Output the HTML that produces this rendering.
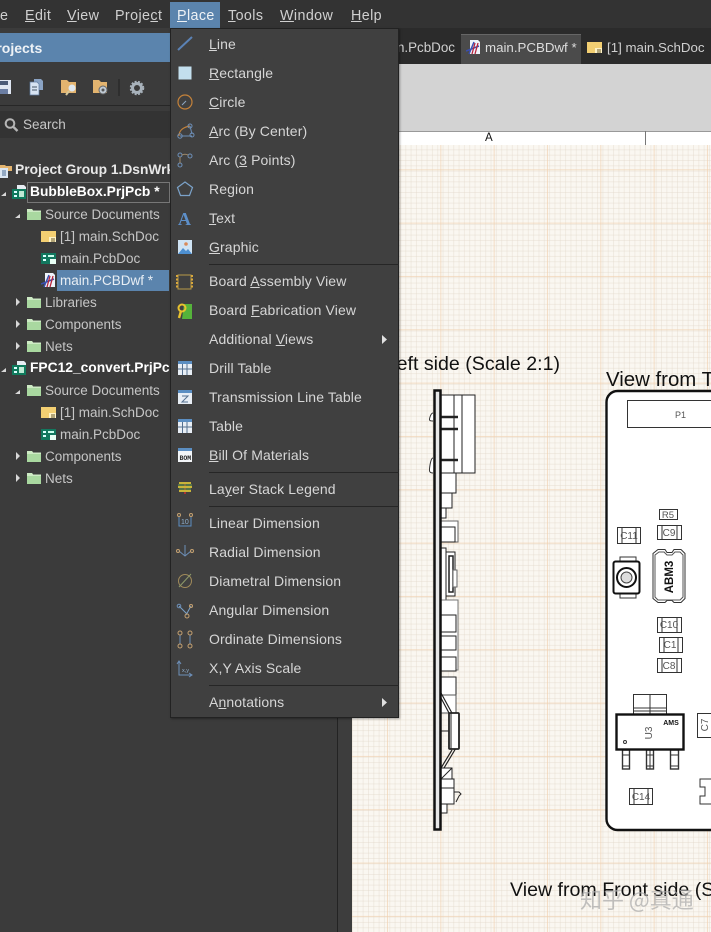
<!DOCTYPE html>
<html><head><meta charset="utf-8">
<style>
html,body{margin:0;padding:0;background:#3b3b3b}
#p{position:relative;width:711px;height:932px;overflow:hidden;background:#3b3b3b;font-family:"Liberation Sans","Noto Sans CJK SC",sans-serif;font-size:14px;color:#cfcfcf}
#p div,#p span.a,#p svg.a{position:absolute}
.t{white-space:nowrap;line-height:20px;height:20px}
.m{left:209px;color:#d6d6d6;letter-spacing:.12px}
.tb{color:#d0d0d0;font-size:14.3px;top:6px;letter-spacing:.4px}
.tr{color:#c6c6c6;font-size:13.5px;margin-top:1px}
.b{font-weight:bold;color:#e8e8e8;font-size:13.8px}
.sep{height:1px;background:#262626;left:209px;width:190px}
#canvas{left:352px;top:145px;width:359px;height:787px;background-color:#faf7f1;
background-image:
linear-gradient(90deg,rgba(240,208,175,.65) 1px,transparent 1px),
linear-gradient(0deg,rgba(240,208,175,.65) 1px,transparent 1px),
linear-gradient(90deg,rgba(225,215,200,.4) 1px,transparent 1px),
linear-gradient(0deg,rgba(225,215,200,.4) 1px,transparent 1px);
background-size:53.33px 53.33px,53.33px 53.33px,5.33px 5.33px,5.33px 5.33px;
background-position:35px 0,0 25.3px,0 0,0 0}
</style></head><body>
<div id="p">
<svg width="0" height="0" style="position:absolute"><defs>
<g id="fold"><path d="M0 2h5l1 1.500h8v9.500H0z" fill="#a9d8a0"/><path d="M0 2h5l1 1.500h8v1.500H0z" fill="#cdeac4"/></g>
<g id="sch"><rect x="0" y="1" width="15" height="11" fill="#f3cf72"/><rect x="8" y="7" width="7" height="5" fill="#fff3c7"/><path d="M10 9h4M10 11h4" stroke="#6a5a2a"/></g>
<g id="pcb"><rect x="0" y="1" width="15" height="11" fill="#12785f"/><rect x="2" y="3" width="3" height="2" fill="#dff"/><rect x="2" y="7" width="3" height="2" fill="#dff"/><rect x="7" y="3" width="6" height="2" fill="#cfe"/><rect x="9" y="7" width="6" height="5" fill="#e8fff5"/></g>
<g id="dwf"><path d="M4 0h8l2 2v12H4z" fill="#eef3fa"/><path d="M0 11L13 6M3 14L8 2" stroke="#3a4fb0" stroke-width="1.500"/><path d="M9 3L6 14M12 3L9 14" stroke="#b8243c" stroke-width="1.300"/></g>
<g id="prj"><path d="M5 0h7l2 2v6H5z" fill="#e6ecf2"/><rect x="0" y="4" width="14" height="10" fill="#0f7a5c"/><rect x="2" y="6" width="3" height="2" fill="#dff"/><rect x="2" y="10" width="3" height="2" fill="#dff"/><rect x="7" y="6" width="5" height="6" fill="#bfe9d5"/></g>
</defs></svg>

<!-- document area -->
<div style="left:338px;top:28px;width:373px;height:36px;background:#2b2b2b"></div>
<div style="left:352px;top:64px;width:359px;height:67px;background:#d3d3d3"></div>
<div style="left:352px;top:131px;width:359px;height:14px;background:#fff;border-top:1px solid #999;box-sizing:border-box"></div>
<div style="left:645px;top:131px;width:1px;height:14px;background:#777"></div>
<div class="t" style="left:485px;top:128px;font-size:11.500px;color:#111">A</div>
<div style="left:461px;top:34px;width:120px;height:30px;background:#4b4b4b;border-top:1px solid #666;box-sizing:border-box"></div>
<div class="t" style="left:396px;top:38px;color:#d0d0d0;font-size:13.400px;width:59px;overflow:hidden;text-align:right">n.PcbDoc</div>
<svg class="a" style="left:466px;top:40px" width="16" height="16"><use href="#dwf"/></svg>
<div class="t" style="left:485px;top:38px;color:#dcdcdc;font-size:13.300px">main.PCBDwf *</div>
<svg class="a" style="left:587px;top:41px" width="16" height="14"><use href="#sch"/></svg>
<div class="t" style="left:607px;top:38px;color:#d0d0d0;font-size:13.300px">[1] main.SchDoc</div>

<div id="canvas"></div>

<!-- drawing -->
<svg class="a" style="left:0;top:0" width="711" height="932" font-family="'Liberation Sans',sans-serif">
<g fill="#fff" stroke="#222" stroke-width="1">
<rect x="441" y="395" width="34" height="78"/>
<path d="M454 395v78M462 395v78" fill="none"/>
<rect x="441" y="473" width="15" height="20"/>
<rect x="441" y="493" width="11" height="15"/>
<rect x="441" y="508" width="5" height="10"/>
<rect x="441" y="521" width="17" height="21" stroke="#666"/>
<rect x="441" y="527" width="14" height="15"/>
<rect x="441" y="548" width="5" height="52"/>
<rect x="446" y="552" width="9" height="44"/>
<rect x="449" y="556" width="4" height="36" stroke-width="1.500"/>
<rect x="453" y="570" width="4" height="17" stroke="#666"/>
<rect x="441" y="600" width="17" height="70" stroke="#777"/>
<rect x="441" y="615" width="15" height="17"/>
<rect x="441" y="636" width="15" height="14"/>
<rect x="441" y="657" width="15" height="14"/>
<rect x="441" y="677" width="15" height="18"/>
<rect x="441" y="695" width="15" height="18" stroke="#555"/>
<path d="M441 693L453 715M441 698L449 713M441 768L452 750M444 768L456 748" fill="none" stroke-width="1.200"/>
<path d="M441 731h9M441 713h0" fill="none"/>
<rect x="449" y="713" width="10" height="36" rx="1" stroke-width="1.800"/>
<path d="M451 713v36" fill="none"/>
<rect x="441" y="768" width="11" height="11"/>
<path d="M441 779L452 768" fill="none"/>
<rect x="441" y="779" width="13" height="10"/>
<rect x="441" y="788" width="13" height="16"/>
<rect x="441" y="804" width="6" height="9"/>
<path d="M454 792h5l2 2-2 2-3 6" fill="none"/>
</g>
<path d="M441 417h17M441 429h17M441 460h17" stroke="#222" stroke-width="2.500"/>
<path d="M433 421c-4 0-4-1-3-4s2-4 3-4M433 473c-4 0-4-2-3-8s2-7 3-7" fill="#fff" stroke="#333"/>
<rect x="434.500" y="390.500" width="6" height="439" fill="#e8e8e8" stroke="#111" stroke-width="2.500"/>
<text x="560" y="370" text-anchor="end" font-size="19.600" fill="#111">View from Left side (Scale 2:1)</text>

<rect x="606.500" y="391" width="130" height="439" rx="11" fill="#fff" stroke="#111" stroke-width="2.400"/>
<text x="606" y="386" font-size="20.400" fill="#111">View from Top</text>
<g fill="#fff" stroke="#333" stroke-width="1">
<rect x="627.500" y="400.500" width="100" height="27"/>
<rect x="659.500" y="509.500" width="18" height="10"/>
<rect x="657.500" y="525.500" width="24" height="14"/><path d="M662 525.500v14M677 525.500v14"/>
<rect x="617.500" y="527.500" width="23" height="16"/><path d="M622 527.500v16M636 527.500v16"/>
<rect x="657.500" y="617.500" width="24" height="15"/><path d="M662 617.500v15M677 617.500v15"/>
<rect x="659.500" y="637.500" width="23" height="15"/><path d="M664 637.500v15M678 637.500v15"/>
<rect x="657.500" y="658.500" width="24" height="14"/><path d="M662 658.500v14M677 658.500v14"/>
<rect x="629.500" y="788.500" width="23" height="16"/><path d="M634 788.500v16M648 788.500v16"/>
<rect x="697.500" y="713.500" width="20" height="24"/>
<path d="M711 779h-11v8h5v9h-5v8h11"/>
<rect x="633.500" y="694.500" width="33" height="20"/><path d="M633.500 708h33M633.500 711h33M650 694.500v20"/>
<rect x="622.500" y="750" width="7" height="19" stroke-width="1.400"/><path d="M622.500 755h7M622.500 766h7"/>
<rect x="646.500" y="750" width="7" height="19" stroke-width="1.400"/><path d="M650 750v19M646.500 755h7M646.500 766h7"/>
<rect x="670.500" y="750" width="8" height="19" stroke-width="1.400"/><path d="M670.500 755h8M670.500 766h8"/>
</g>
<rect x="616.500" y="714.500" width="67" height="35" fill="#fff" stroke="#111" stroke-width="2.400"/>
<circle cx="625" cy="742" r="1.500" fill="none" stroke="#333"/>
<text x="671" y="725" text-anchor="middle" font-size="7" font-weight="bold" fill="#111">AMS</text>
<text transform="translate(652,733) rotate(-90)" text-anchor="middle" font-size="10" fill="#555">U3</text>
<text x="680.500" y="418" text-anchor="middle" font-size="9" fill="#555">P1</text>
<text x="668" y="518" text-anchor="middle" font-size="9.500" fill="#555">R5</text>
<text x="669" y="536" text-anchor="middle" font-size="10" fill="#555">C9</text>
<text x="629" y="539" text-anchor="middle" font-size="10" fill="#555">C11</text>
<text x="669" y="628" text-anchor="middle" font-size="10" fill="#555">C10</text>
<text x="670" y="648" text-anchor="middle" font-size="10" fill="#555">C1</text>
<text x="669" y="669" text-anchor="middle" font-size="10" fill="#555">C8</text>
<text x="641" y="800" text-anchor="middle" font-size="10" fill="#555">C14</text>
<text transform="translate(708,725) rotate(-90)" text-anchor="middle" font-size="10" fill="#555">C7</text>
<path d="M658 549.500h7l2 3h5l2-3h7l4 4v45l-4 4h-7l-2-2h-5l-2 2h-7l-5-4v-45z" fill="#fff" stroke="#333"/>
<path d="M659 552h5l3 3h5l3-3h5l3 3v42l-3 3h-22l-3-3v-42z" fill="none" stroke="#555"/>
<text transform="translate(673,577) rotate(-90)" text-anchor="middle" font-size="11.500" font-weight="bold" fill="#111">ABM3</text>
<rect x="620" y="557" width="16" height="5" fill="#fff" stroke="#333"/>
<rect x="620" y="593" width="16" height="5" fill="#fff" stroke="#333"/>
<rect x="613.500" y="561.500" width="26" height="32" rx="2" fill="#fff" stroke="#111" stroke-width="2"/>
<circle cx="626.500" cy="577.500" r="9.500" fill="#fff" stroke="#111" stroke-width="2"/>
<circle cx="626.500" cy="577.500" r="5.500" fill="#ddd" stroke="#444"/>
<text x="510" y="896" font-size="19.600" fill="#111">View from Front side (Scale 2:1)</text>
<text x="580" y="908" font-size="22" fill="#aaa" fill-opacity=".72" font-family="'Noto Sans CJK SC',sans-serif">知乎 @真通</text>
</svg>

<!-- left panel -->
<div style="left:0;top:0;width:711px;height:28px;background:#333"></div>
<div style="left:0;top:28px;width:338px;height:904px;background:#3b3b3b"></div>
<div style="left:337px;top:28px;width:1px;height:904px;background:#232323"></div>
<div style="left:338px;top:64px;width:14px;height:868px;background:#3d3d3d"></div>
<div style="left:0;top:33px;width:338px;height:29px;background:#5b84ad"></div>
<div class="t" style="left:-13px;top:38px;color:#eef2f6;font-weight:bold;font-size:14px">Projects</div>
<div style="left:0;top:105px;width:338px;height:1px;background:#272727"></div>
<div style="left:0;top:111px;width:338px;height:27px;background:#333"></div>
<svg class="a" style="left:0;top:77px" width="150" height="22">
<rect x="-2" y="3" width="13" height="14" fill="#dfe6f2"/><rect x="0" y="4" width="8" height="4" fill="#4a5a78"/><rect x="0" y="12" width="8" height="5" fill="#6b7ea3"/>
<path d="M34 2h7l2 2v9h-9z" fill="#8aa3c4"/><path d="M30 5h7l2 2v11h-9z" fill="#d7e3f2" stroke="#5d7aa0" stroke-width=".7"/><path d="M32 10h5M32 13h5" stroke="#456"/>
<path d="M61 3h6l2 2h7v11H61z" fill="#e3b46f"/><circle cx="72" cy="11" r="3.500" fill="#dfe8f0"/><path d="M69 14l-3 4" stroke="#d8c89a" stroke-width="2"/>
<path d="M93 3h6l2 2h6v11H93z" fill="#e3b46f"/><circle cx="103" cy="13" r="4" fill="#bfcad4" stroke="#666"/><circle cx="103" cy="13" r="1.500" fill="#555"/>
<path d="M119 2v17" stroke="#222"/>
<circle cx="137" cy="11" r="4.500" fill="none" stroke="#a8b2bb" stroke-width="3"/><circle cx="137" cy="11" r="6.500" fill="none" stroke="#a8b2bb" stroke-width="1.500" stroke-dasharray="2 1.500"/>
</svg>
<svg class="a" style="left:4px;top:117px" width="16" height="16"><circle cx="6" cy="6.500" r="4.300" fill="none" stroke="#b5b5b5" stroke-width="2"/><path d="M9.500 10l4 4" stroke="#b5b5b5" stroke-width="2.400"/></svg>
<div class="t" style="left:23px;top:115px;color:#c8c8c8;font-size:13.500px">Search</div>

<!-- tree -->
<div style="left:27px;top:182px;width:143px;height:21px;border:1px solid #777;box-sizing:border-box"></div>
<div style="left:57px;top:270px;width:112px;height:21px;background:#5b84ad"></div>
<svg class="a" style="left:0;top:163px" width="14" height="16"><path d="M0 2h5l1 1h6v5H0z" fill="#e3b46f"/><rect x="0" y="5" width="8" height="10" fill="#dbe6f2"/><path d="M2 8h4M2 10h4M2 12h4" stroke="#4a6a92"/></svg>
<div class="t b" style="left:15px;top:160px;width:155px;overflow:hidden">Project Group 1.DsnWrk</div>
<svg class="a" style="left:12px;top:185px" width="15" height="15"><use href="#prj"/></svg>
<div class="t b" style="left:30px;top:182px;color:#fff;width:140px;overflow:hidden">BubbleBox.PrjPcb *</div>
<svg class="a" style="left:27px;top:207px" width="14" height="14"><use href="#fold"/></svg>
<div class="t tr" style="left:45px;top:204px">Source Documents</div>
<svg class="a" style="left:41px;top:230px" width="16" height="13"><use href="#sch"/></svg>
<div class="t tr" style="left:60px;top:226px">[1] main.SchDoc</div>
<svg class="a" style="left:41px;top:252px" width="16" height="13"><use href="#pcb"/></svg>
<div class="t tr" style="left:60px;top:248px">main.PcbDoc</div>
<svg class="a" style="left:41px;top:273px" width="16" height="16"><use href="#dwf"/></svg>
<div class="t tr" style="left:60px;top:270px;color:#e8eef4">main.PCBDwf *</div>
<svg class="a" style="left:27px;top:295px" width="14" height="14"><use href="#fold"/></svg>
<div class="t tr" style="left:45px;top:292px">Libraries</div>
<svg class="a" style="left:27px;top:317px" width="14" height="14"><use href="#fold"/></svg>
<div class="t tr" style="left:45px;top:314px">Components</div>
<svg class="a" style="left:27px;top:339px" width="14" height="14"><use href="#fold"/></svg>
<div class="t tr" style="left:45px;top:336px">Nets</div>
<svg class="a" style="left:12px;top:361px" width="15" height="15"><use href="#prj"/></svg>
<div class="t b" style="left:30px;top:358px;color:#fff;width:140px;overflow:hidden">FPC12_convert.PrjPcb</div>
<svg class="a" style="left:27px;top:383px" width="14" height="14"><use href="#fold"/></svg>
<div class="t tr" style="left:45px;top:380px">Source Documents</div>
<svg class="a" style="left:41px;top:406px" width="16" height="13"><use href="#sch"/></svg>
<div class="t tr" style="left:60px;top:402px">[1] main.SchDoc</div>
<svg class="a" style="left:41px;top:428px" width="16" height="13"><use href="#pcb"/></svg>
<div class="t tr" style="left:60px;top:424px">main.PcbDoc</div>
<svg class="a" style="left:27px;top:449px" width="14" height="14"><use href="#fold"/></svg>
<div class="t tr" style="left:45px;top:446px">Components</div>
<svg class="a" style="left:27px;top:471px" width="14" height="14"><use href="#fold"/></svg>
<div class="t tr" style="left:45px;top:468px">Nets</div>
<svg class="a" style="left:0;top:160px" width="24" height="330" fill="#d8d8d8">
<path d="M1 36l5-4v4zM15 58l5-4v4zM16 138v8l4-4zM16 160v8l4-4zM16 182v8l4-4zM1 212l5-4v4zM15 234l5-4v4zM16 292v8l4-4zM16 314v8l4-4z"/>
</svg>

<!-- top menu -->
<div style="left:170px;top:2px;width:50px;height:26px;background:#5b84ad"></div>
<div class="t tb" style="left:0">e</div>
<div class="t tb" style="left:25px"><u>E</u>dit</div>
<div class="t tb" style="left:67px"><u>V</u>iew</div>
<div class="t tb" style="left:115px">Proje<u>c</u>t</div>
<div class="t tb" style="left:177px;color:#eef2f6"><u>P</u>lace</div>
<div class="t tb" style="left:228px"><u>T</u>ools</div>
<div class="t tb" style="left:280px"><u>W</u>indow</div>
<div class="t tb" style="left:351px"><u>H</u>elp</div>

<!-- dropdown -->
<div style="left:170px;top:28px;width:229px;height:690px;background:#404040;border:1px solid #222;box-sizing:border-box;box-shadow:1px 1px 2px rgba(0,0,0,.35)"></div>
<div class="t m" style="top:34px"><u>L</u>ine</div>
<div class="t m" style="top:63px"><u>R</u>ectangle</div>
<div class="t m" style="top:92px"><u>C</u>ircle</div>
<div class="t m" style="top:121px"><u>A</u>rc (By Center)</div>
<div class="t m" style="top:150px">Arc (<u>3</u> Points)</div>
<div class="t m" style="top:179px">Re<u>g</u>ion</div>
<div class="t m" style="top:208px"><u>T</u>ext</div>
<div class="t m" style="top:237px"><u>G</u>raphic</div>
<div class="sep" style="top:264px"></div>
<div class="t m" style="top:271px">Board <u>A</u>ssembly View</div>
<div class="t m" style="top:300px">Board <u>F</u>abrication View</div>
<div class="t m" style="top:329px">Additional <u>V</u>iews</div>
<div class="t m" style="top:358px">Drill Table</div>
<div class="t m" style="top:387px">Transmission Line Table</div>
<div class="t m" style="top:416px">Table</div>
<div class="t m" style="top:445px"><u>B</u>ill Of Materials</div>
<div class="sep" style="top:472px"></div>
<div class="t m" style="top:479px">La<u>y</u>er Stack Legend</div>
<div class="sep" style="top:506px"></div>
<div class="t m" style="top:513px">Linear Dimension</div>
<div class="t m" style="top:542px">Radial Dimension</div>
<div class="t m" style="top:571px">Diametral Dimension</div>
<div class="t m" style="top:600px">Angular Dimension</div>
<div class="t m" style="top:629px">Ordinate Dimensions</div>
<div class="t m" style="top:658px">X,Y Axis Scale</div>
<div class="sep" style="top:685px"></div>
<div class="t m" style="top:692px">A<u>n</u>notations</div>
<svg class="a" style="left:170px;top:29px" width="229" height="689" fill="none">
<path d="M8 21L22 8" stroke="#5b82b5" stroke-width="2"/>
<rect x="8.500" y="37.500" width="13" height="13" fill="#c3dfee"/>
<circle cx="15" cy="73" r="7" stroke="#c4823a" stroke-width="1.200"/><path d="M12 76l4-4" stroke="#8ea9c5"/>
<path d="M9 107c0-6 5-9 11-10" stroke="#c4823a" stroke-width="1.200"/><path d="M20 97l2 8M10 107h12" stroke="#6d8fb8"/><circle cx="20" cy="97" r="2" stroke="#6d8fb8"/><circle cx="10" cy="107" r="2.200" stroke="#6d8fb8"/><circle cx="22" cy="106" r="2" stroke="#6d8fb8"/>
<circle cx="10" cy="126" r="2" stroke="#6d8fb8"/><circle cx="20" cy="127" r="2" stroke="#6d8fb8"/><circle cx="10" cy="136" r="2" stroke="#6d8fb8"/><path d="M10 128v6M12 126c2-1 4-1 6 0" stroke="#a08a6a"/>
<path d="M15 153l7.500 5.500-3 8h-9l-3-8z" stroke="#7ba2c9" stroke-width="1.200"/>
<text x="8" y="196" font-family="'Liberation Serif',serif" font-weight="bold" font-size="18" fill="#5d8fc9">A</text>
<rect x="8" y="211" width="14" height="14" fill="#cfe3f4"/><path d="M8 225l5-6 3 3 2-2 4 5z" fill="#4d8fd0"/><circle cx="16" cy="215" r="1.800" fill="#d98a5a"/>
<rect x="8" y="246" width="13" height="14" stroke="#b99a48"/><path d="M7 246v14M22 246v14" stroke="#d9a83c" stroke-width="2" stroke-dasharray="2 1.500"/>
<path d="M14 275h8v15h-10z" fill="#55b33b"/><circle cx="12" cy="279" r="3.500" stroke="#e8c22e" stroke-width="2"/><path d="M11 282l-2 7" stroke="#e8c22e" stroke-width="2.400"/>
<rect x="8" y="332" width="14" height="14" fill="#e8eef5"/><rect x="8" y="332" width="14" height="3" fill="#5b8ec2"/><path d="M8 340h14M12.500 335v11M17 335v11" stroke="#55708f"/>
<rect x="8" y="361" width="14" height="14" fill="#e8eef5"/><rect x="8" y="361" width="14" height="3" fill="#5b8ec2"/><path d="M12 367h6l-6 6h6" stroke="#55708f"/>
<rect x="8" y="390" width="14" height="14" fill="#e8eef5"/><rect x="8" y="390" width="14" height="3" fill="#5b8ec2"/><path d="M8 398h14M12.500 393v11M17 393v11" stroke="#55708f"/>
<rect x="8" y="419" width="14" height="14" fill="#f2f5f8"/><rect x="8" y="419" width="14" height="3" fill="#5b8ec2"/>
<text x="9.500" y="431" font-family="'Liberation Mono',monospace" font-size="6.500" font-weight="bold" fill="#222">BOM</text>
<path d="M15 453v12" stroke="#a33" stroke-width="2"/><path d="M9 454h12M8 458h14M9 462h12" stroke="#c9b43a" stroke-width="2"/><path d="M8 456h14M9 460h12" stroke="#6aa84f"/>
<path d="M9 488v9h12v-9" stroke="#5b8ec2"/><circle cx="9" cy="486" r="1.500" stroke="#c4a070"/><circle cx="21" cy="486" r="1.500" stroke="#c4a070"/>
<text x="11" y="495" font-size="7" fill="#8fb0d0">10</text>
<path d="M9 522l6 5 6-5M15 516v11" stroke="#6d8fb8"/><circle cx="8" cy="522" r="1.500" stroke="#c4a070"/><circle cx="22" cy="522" r="1.500" stroke="#c4a070"/>
<circle cx="15" cy="552" r="6.500" stroke="#a08a5a"/><path d="M9 558l12-13" stroke="#8e9a6a"/>
<path d="M9 577l8 8M21 577l-5 9" stroke="#7ba2c9"/><circle cx="9" cy="577" r="1.800" stroke="#6d8fb8"/><circle cx="17" cy="587" r="2" stroke="#c4a070"/><circle cx="21" cy="577" r="1.500" stroke="#c4a070"/>
<path d="M10 606v9M20 606v9" stroke="#6d8fb8"/><circle cx="10" cy="604" r="2" stroke="#c4a070"/><circle cx="20" cy="604" r="2" stroke="#c4a070"/><circle cx="10" cy="617" r="2" stroke="#c4a070"/><circle cx="20" cy="617" r="2" stroke="#c4a070"/>
<path d="M9 632v14h13M7 635l2-3 2 3M19 644l3 2-3 2" stroke="#6d8fb8"/>
<text x="12" y="643" font-size="5.500" fill="#8fb0d0">x,y</text>
<path d="M212 306v9l5-4.500zM212 669v9l5-4.500z" fill="#e0e0e0"/>
</svg>
</div>
</body></html>
